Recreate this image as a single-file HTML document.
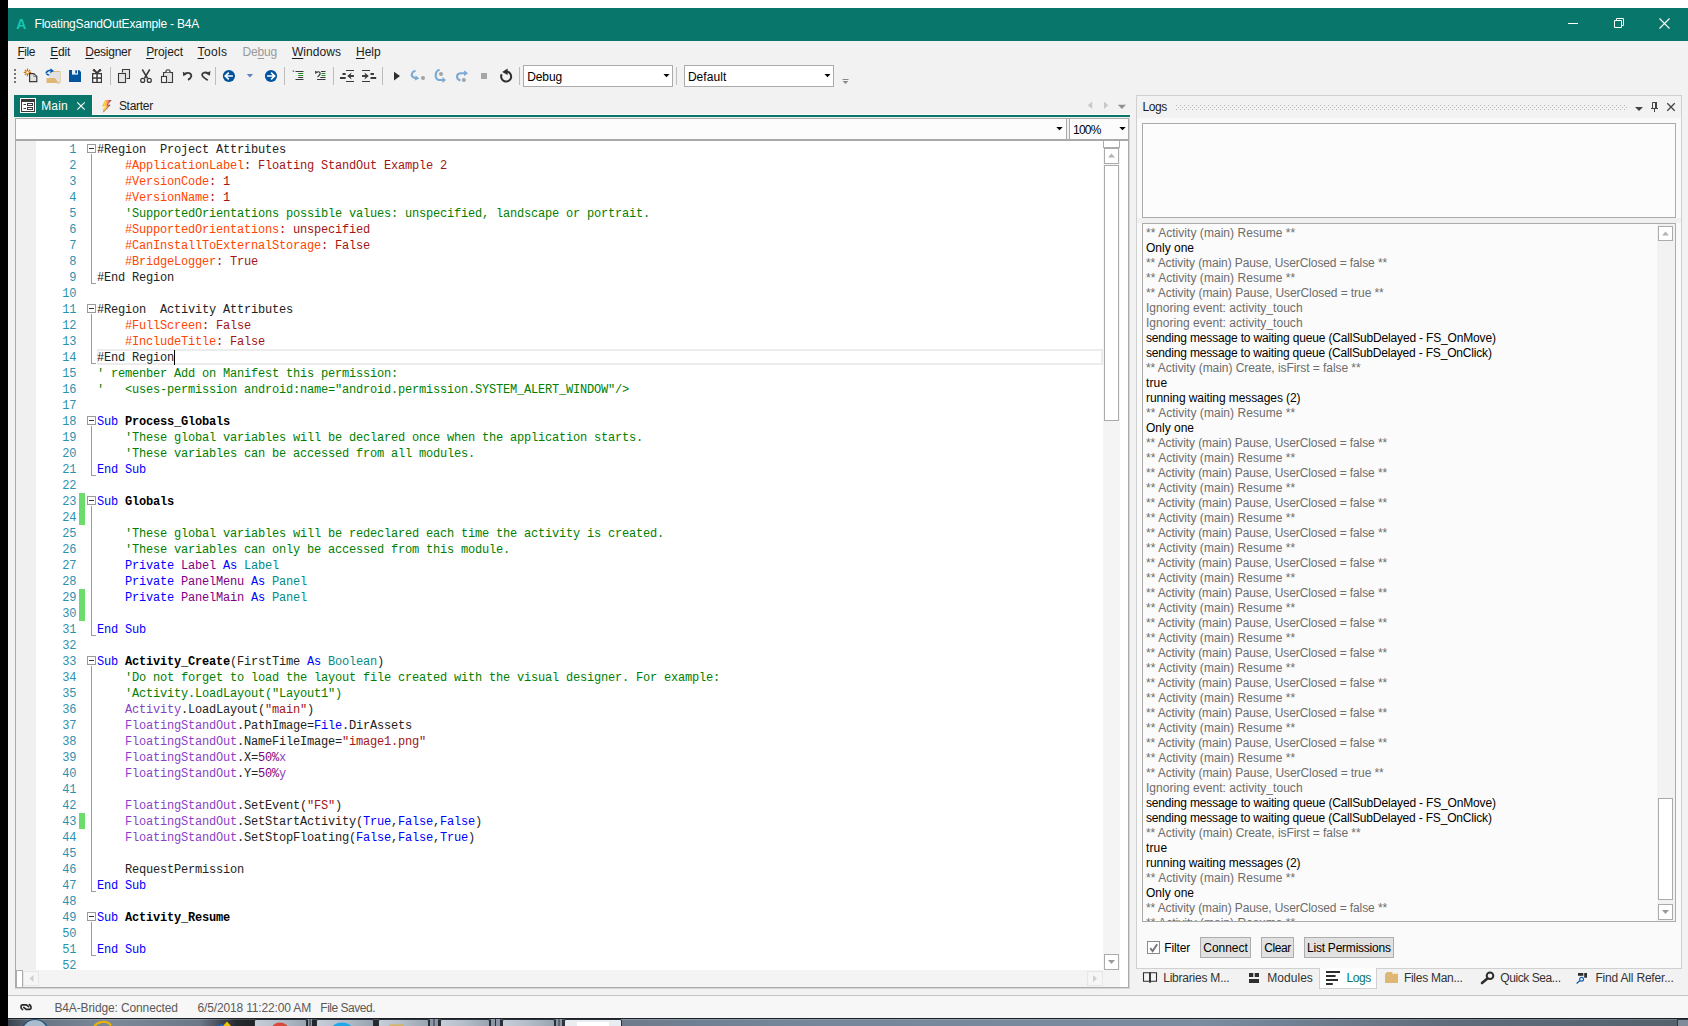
<!DOCTYPE html>
<html><head><meta charset="utf-8"><title>FloatingSandOutExample - B4A</title>
<style>
html,body{margin:0;padding:0;}
body{width:1688px;height:1026px;position:relative;overflow:hidden;background:#f2f2f2;font-family:"Liberation Sans",sans-serif;font-size:12px;}
.a{position:absolute;}
.t{white-space:pre;}
u{text-decoration:underline;text-underline-offset:1.5px;text-decoration-thickness:1px;}
pre{margin:0;font-family:"Liberation Mono",monospace;font-size:12px;letter-spacing:-0.2012px;line-height:16px;}
.ln{color:#2b91af;text-align:right;}
.code{color:#222;}
.k{color:#0000ff}.c{color:#008000}.o{color:#ff4500}.r{color:#a31515}.p{color:#800080}.q{color:#8b3fc7}
.y{color:#008b8b}.b{color:#000;font-weight:bold}.d{color:#222}.n{color:#800080}
</style></head>
<body>
<div class="a " style="left:0px;top:0px;width:8px;height:1026px;background:#000;"></div>
<div class="a " style="left:8px;top:0px;width:1680px;height:8px;background:#fff;"></div>
<div class="a " style="left:8px;top:8px;width:1680px;height:33px;background:#08766A;"></div>
<div class="a " style="left:8px;top:41px;width:1680px;height:977px;background:#F2F2F2;"></div>
<span class="a t" style="left:16.2px;top:15.55px;font-size:14px;line-height:16px;color:#17C7B3;letter-spacing:-0.511px;font-weight:bold;">A</span>
<span class="a t" style="left:34.5px;top:16.24px;font-size:12px;line-height:16px;color:#fff;letter-spacing:-0.199px;">FloatingSandOutExample - B4A</span>
<svg class="a" style="left:1560px;top:8px" width="128" height="33" viewBox="0 0 128 33">
<path d="M8 15.5h10" stroke="#fff" stroke-width="1" fill="none"/>
<path d="M54.5 12.5h7v7h-7z M56.5 12.5v-2h7v7h-2" stroke="#fff" stroke-width="1" fill="none"/>
<path d="M99.5 10.5l10 10 M109.5 10.5l-10 10" stroke="#fff" stroke-width="1.1" fill="none"/>
</svg>
<span class="a t" style="left:17.5px;top:44.44px;font-size:12px;line-height:16px;color:#1b1b1b;letter-spacing:-0.509px;"><u>F</u>ile</span>
<span class="a t" style="left:50.2px;top:44.44px;font-size:12px;line-height:16px;color:#1b1b1b;letter-spacing:-0.219px;"><u>E</u>dit</span>
<span class="a t" style="left:85.3px;top:44.44px;font-size:12px;line-height:16px;color:#1b1b1b;letter-spacing:-0.265px;"><u>D</u>esigner</span>
<span class="a t" style="left:146.2px;top:44.44px;font-size:12px;line-height:16px;color:#1b1b1b;letter-spacing:-0.092px;"><u>P</u>roject</span>
<span class="a t" style="left:197.6px;top:44.44px;font-size:12px;line-height:16px;color:#1b1b1b;letter-spacing:0.317px;"><u>T</u>ools</span>
<span class="a t" style="left:242.6px;top:44.44px;font-size:12px;line-height:16px;color:#9a9a9a;letter-spacing:-0.192px;">De<u>b</u>ug</span>
<span class="a t" style="left:291.9px;top:44.44px;font-size:12px;line-height:16px;color:#1b1b1b;letter-spacing:0.060px;"><u>W</u>indows</span>
<span class="a t" style="left:355.9px;top:44.44px;font-size:12px;line-height:16px;color:#1b1b1b;letter-spacing:0.055px;"><u>H</u>elp</span>
<svg class="a" style="left:8px;top:62px" width="860" height="30" viewBox="8 62 860 30"><rect x="14" y="69" width="2" height="2" fill="#767676"/><rect x="14" y="73" width="2" height="2" fill="#767676"/><rect x="14" y="77" width="2" height="2" fill="#767676"/><rect x="14" y="81" width="2" height="2" fill="#767676"/><rect x="110" y="67" width="1" height="18" fill="#bdbdbd"/><rect x="215" y="67" width="1" height="18" fill="#bdbdbd"/><rect x="284" y="67" width="1" height="18" fill="#bdbdbd"/><rect x="333" y="67" width="1" height="18" fill="#bdbdbd"/><rect x="382" y="67" width="1" height="18" fill="#bdbdbd"/><rect x="519" y="67" width="1" height="18" fill="#bdbdbd"/><rect x="676" y="67" width="1" height="18" fill="#bdbdbd"/><g stroke="#c8740a" stroke-width="1.15" fill="none"><path d="M27.5 68.6v7.6M23.7 72.4h7.6M24.9 69.8l5.2 5.2M30.1 69.8l-5.2 5.2"/></g><circle cx="27.5" cy="72.4" r="1.2" fill="#fff"/><path d="M29.6 73.6h4.2l3 3v5h-7.2z" fill="#e4e4e4" stroke="#3a3a3a" stroke-width="1.2"/><path d="M33.9 74v2.6h2.6z" fill="#fff" stroke="#3a3a3a" stroke-width="0.6"/><path d="M53 71.5h7v11.5h-3" fill="none" stroke="#e0b878" stroke-width="1"/><path d="M49 72h10.5v10.5h-10.5z" fill="#e2e2e2"/><path d="M46.5 78h8.5l3.5 5h-12z" fill="#deb775"/><path d="M46.3 73.2c0-3 6-3.6 6.3-1.6" fill="none" stroke="#0a5cb0" stroke-width="1.7"/><path d="M50.6 68.3l3.2 2.6l-3.6 2.4z" fill="#0a5cb0"/><path d="M46.4 73.5c0.6 1.3 1.6 1.6 2.8 1.6" fill="none" stroke="#0a5cb0" stroke-width="1.5"/><path d="M69 70h10l2 2v10h-12z" fill="#00539c"/><rect x="72" y="70" width="6" height="4.6" fill="#e8eef6"/><rect x="75.3" y="70.3" width="1.7" height="3" fill="#00539c"/><rect x="92" y="73" width="10" height="10" fill="#3a3a3a"/><rect x="93.3" y="74.3" width="3" height="3" fill="#fff"/><rect x="97.8" y="74.3" width="3" height="3" fill="#fff"/><rect x="93.3" y="78.8" width="3" height="3" fill="#fff"/><rect x="97.8" y="78.8" width="3" height="3" fill="#fff"/><path d="M97 73l-3.2-3.2M97 73l3.2-3.2" stroke="#3a3a3a" stroke-width="1.8" fill="none"/><circle cx="94" cy="70.2" r="1.2" fill="#3a3a3a"/><circle cx="100" cy="70.2" r="1.2" fill="#3a3a3a"/><path d="M122.5 72.5v-3h7v9h-3" fill="#e4e4e4" stroke="#3a3a3a" stroke-width="1.1"/><rect x="118.5" y="73.5" width="7" height="9" fill="#e4e4e4" stroke="#3a3a3a" stroke-width="1.1"/><path d="M142.3 69.5l5.3 9M149.7 69.5l-5.3 9" stroke="#3a3a3a" stroke-width="1.5" fill="none"/><circle cx="142.7" cy="80.4" r="2" fill="#f2f2f2" stroke="#3a3a3a" stroke-width="1.2"/><circle cx="149.3" cy="80.4" r="2" fill="#f2f2f2" stroke="#3a3a3a" stroke-width="1.2"/><path d="M163.5 76v-3.5h9v10h-5" fill="#e4e4e4" stroke="#3a3a3a" stroke-width="1.1"/><path d="M165.8 72.3c0-3.4 4.4-3.4 4.4 0" fill="#f2f2f2" stroke="#3a3a3a" stroke-width="1.1"/><rect x="161.5" y="76.5" width="5" height="6" fill="#f4f4f4" stroke="#3a3a3a" stroke-width="1.1"/><path d="M184.5 74.2c3-2.4 7-1 6.8 2c-0.2 1.6-1.4 2.6-3.3 3.7" fill="none" stroke="#3a3a3a" stroke-width="1.8"/><path d="M182.7 71.8l0.6 4.4l3.8-2.2z" fill="#3a3a3a"/><path d="M208.3 73.4c-2.6-1.6-6-1-6.2 1.2c-0.1 1.6 2 3.4 5.6 5.6" fill="none" stroke="#3a3a3a" stroke-width="1.8"/><path d="M210.4 71l-0.5 4.8l-4.2-2.4z" fill="#3a3a3a"/><circle cx="228.9" cy="76" r="6.1" fill="#00539c"/><path d="M232.9 76h-7M228.8 72.7l-3.5 3.3l3.5 3.3" fill="none" stroke="#fff" stroke-width="1.7"/><path d="M246.8 74h6.2l-3.1 3.4z" fill="#5b7fc4"/><circle cx="271" cy="76" r="6.1" fill="#00539c"/><path d="M267 76h7M271.1 72.7l3.5 3.3l-3.5 3.3" fill="none" stroke="#fff" stroke-width="1.7"/><path d="M295.5 71.5h8M298.2 77.5h5M295.5 79.5h8" stroke="#3a3a3a" stroke-width="1"/><path d="M298.2 73.5h5M298.2 75.5h5" stroke="#258a25" stroke-width="1"/><rect x="292.6" y="70.6" width="1.6" height="1" fill="#3a3a3a"/><path d="M321 71.5h4.5M320.3 77.5h5.2M317 79.5h8.5" stroke="#3a3a3a" stroke-width="1"/><path d="M321.5 73.5h4M321.5 75.5h4" stroke="#258a25" stroke-width="1"/><path d="M316.5 72.3c2.2-1.2 4-0.2 3.6 1.5c-0.3 1.2-1.3 2-2.6 3.2" fill="none" stroke="#3a3a3a" stroke-width="1.2"/><path d="M315 70.8l0.3 3.2l2.6-1.8z" fill="#3a3a3a"/><path d="M346 70.5h8M346 81.5h8" stroke="#3a3a3a" stroke-width="1"/><path d="M342.5 74h3.2M340 78h5.7" stroke="#3a3a3a" stroke-width="2"/><path d="M354 76h-4" stroke="#3a3a3a" stroke-width="1.9"/><path d="M351.6 72.4l-4.4 3.6l4.4 3.6l-1.2-3.6z" fill="#3a3a3a"/><path d="M362 70.5h8M362 81.5h8" stroke="#3a3a3a" stroke-width="1"/><path d="M370.5 74h3.4M370.5 78h5.7" stroke="#3a3a3a" stroke-width="2"/><path d="M362 76h4" stroke="#3a3a3a" stroke-width="1.9"/><path d="M364.4 72.4l4.4 3.6l-4.4 3.6l1.2-3.6z" fill="#3a3a3a"/><path d="M394 71.8v8.6l6-4.3z" fill="#2e2e2e"/><path d="M415.5 70.8c-4 1-4.8 4.6-2.4 6.4l3.6 1.6" fill="none" stroke="#7da9d2" stroke-width="2.1"/><path d="M415.6 75.6l3.8 3l-4.6 2z" fill="#7da9d2"/><circle cx="423" cy="78" r="2" fill="#a2a2a2"/><path d="M439.6 69.8c-4.6 1-5.4 8.6-1 10.2h5" fill="none" stroke="#7da9d2" stroke-width="2.1"/><path d="M442.4 77l3.6 3l-3.6 3z" fill="#7da9d2"/><circle cx="441" cy="73.9" r="2" fill="#a2a2a2"/><path d="M460.5 80.6c-4.6-1.4-4.6-7 0-7.4h5" fill="none" stroke="#7da9d2" stroke-width="2.1"/><path d="M464.2 70.2l3.8 3l-3.8 3z" fill="#7da9d2"/><circle cx="463.9" cy="79.9" r="2" fill="#a2a2a2"/><rect x="481" y="73" width="6" height="6" fill="#a6a6a6"/><path d="M501.7 74.3A5 5 0 1 0 506.6 71.6" fill="none" stroke="#2e2e2e" stroke-width="2"/><path d="M502.2 71.9L507.6 68.5L507.6 75z" fill="#2e2e2e"/><rect x="523.5" y="65.5" width="149" height="21" fill="#fff" stroke="#ababab" stroke-width="1"/><path d="M663.5 74h6l-3 3.2z" fill="#000"/><rect x="684.5" y="65.5" width="149" height="21" fill="#fff" stroke="#ababab" stroke-width="1"/><path d="M824.5 74h6l-3 3.2z" fill="#000"/><path d="M842.5 79.5h6" stroke="#8a8a8a" stroke-width="1"/><path d="M842.6 81h5.8l-2.9 3z" fill="#8a8a8a"/></svg>
<span class="a t" style="left:527.3px;top:69.24px;font-size:12px;line-height:16px;color:#000;letter-spacing:-0.132px;">Debug</span>
<span class="a t" style="left:687.9px;top:69.24px;font-size:12px;line-height:16px;color:#000;letter-spacing:0.054px;">Default</span>
<div class="a " style="left:14px;top:95px;width:78px;height:20px;background:#08766A;"></div>
<div class="a " style="left:92px;top:114px;width:1038px;height:1px;background:#fdfbfb;"></div>
<div class="a " style="left:92px;top:95px;width:1px;height:20px;background:#fbfbfb;"></div>
<div class="a " style="left:14px;top:115px;width:1116px;height:2px;background:#08766A;"></div>
<svg class="a" style="left:14px;top:95px" width="150" height="20" viewBox="14 95 150 20"><rect x="20" y="98" width="16" height="15" fill="#fff"/><rect x="21.5" y="99.5" width="13" height="12" fill="#fff" stroke="#3a3a3a" stroke-width="1"/><rect x="21" y="99" width="14" height="3" fill="#3a3a3a"/><path d="M23.5 104.5h2.5M23.5 108.5h2.5" stroke="#3a3a3a" stroke-width="1"/><rect x="27.5" y="103.5" width="5" height="2" fill="none" stroke="#3a3a3a" stroke-width="1"/><rect x="27.5" y="107.5" width="5" height="2" fill="none" stroke="#3a3a3a" stroke-width="1"/><path d="M77.3 102.3l7.4 7.4M84.7 102.3l-7.4 7.4" stroke="#fff" stroke-width="1.2" fill="none"/><defs><linearGradient id="lg" x1="0" y1="0" x2="1" y2="0"><stop offset="0" stop-color="#c4c63a"/><stop offset="0.35" stop-color="#ffd24a"/><stop offset="0.7" stop-color="#ff6e6e"/><stop offset="1" stop-color="#7a2a2a"/></linearGradient></defs><path d="M105 100.1H111.2L107 105H110.2L103.3 112.2L102.7 109.6L105.6 106.6H102z" fill="url(#lg)"/><path d="M111.2 100.1L107 105H110.2L103.3 112.2" fill="none" stroke="#5a2414" stroke-width="0.7" stroke-opacity="0.75"/></svg>
<span class="a t" style="left:41.2px;top:97.54px;font-size:12px;line-height:16px;color:#fff;letter-spacing:0.173px;">Main</span>
<span class="a t" style="left:118.9px;top:97.54px;font-size:12px;line-height:16px;color:#1b1b1b;letter-spacing:-0.273px;">Starter</span>
<div class="a " style="left:15px;top:118px;width:1114px;height:870px;background:#fff;border:1px solid #ababab;box-sizing:border-box;"></div>
<div class="a " style="left:1129px;top:118px;width:1px;height:871px;background:#d6d6d6;"></div>
<div class="a " style="left:15px;top:988px;width:1115px;height:1px;background:#d6d6d6;"></div>
<div class="a " style="left:16px;top:119px;width:1112px;height:20px;background:#fcfcfc;"></div>
<div class="a " style="left:16px;top:139px;width:1112px;height:2px;background:#a9a9a9;"></div>
<div class="a " style="left:1066px;top:119px;width:1px;height:20px;background:#ababab;"></div>
<div class="a " style="left:1067px;top:119px;width:2px;height:20px;background:#f0f0f0;"></div>
<div class="a " style="left:1069px;top:119px;width:1px;height:20px;background:#ababab;"></div>
<span class="a t" style="left:1073px;top:122.24px;font-size:12px;line-height:16px;color:#000;letter-spacing:-0.798px;">100%</span>
<svg class="a" style="left:1056px;top:126px" width="8" height="5"><path d="M0.3 1h6.4l-3.2 3.3z" fill="#000"/></svg>
<svg class="a" style="left:1119px;top:126px" width="8" height="5"><path d="M0.3 1h6.4l-3.2 3.3z" fill="#000"/></svg>
<div class="a " style="left:16px;top:141px;width:20px;height:829px;background:#f0f0f0;"></div>
<div class="a" style="left:97px;top:349px;width:1006px;height:16px;border:2px solid #ececec;box-sizing:border-box"></div>
<div class="a" style="left:79px;top:493px;width:6px;height:16px;background:#6cdc6c"></div>
<div class="a" style="left:79px;top:509px;width:6px;height:16px;background:#6cdc6c"></div>
<div class="a" style="left:79px;top:589px;width:6px;height:16px;background:#6cdc6c"></div>
<div class="a" style="left:79px;top:605px;width:6px;height:16px;background:#6cdc6c"></div>
<div class="a" style="left:79px;top:813px;width:6px;height:16px;background:#6cdc6c"></div>
<div class="a" style="left:87px;top:144px;width:9px;height:9px;border:1px solid #9a9a9a;box-sizing:border-box;background:#fff"></div>
<div class="a" style="left:89px;top:148px;width:5px;height:1px;background:#333"></div>
<div class="a" style="left:91px;top:154px;width:1px;height:130px;background:#9a9a9a"></div>
<div class="a" style="left:91px;top:283px;width:5px;height:1px;background:#9a9a9a"></div>
<div class="a" style="left:87px;top:304px;width:9px;height:9px;border:1px solid #9a9a9a;box-sizing:border-box;background:#fff"></div>
<div class="a" style="left:89px;top:308px;width:5px;height:1px;background:#333"></div>
<div class="a" style="left:91px;top:314px;width:1px;height:50px;background:#9a9a9a"></div>
<div class="a" style="left:91px;top:363px;width:5px;height:1px;background:#9a9a9a"></div>
<div class="a" style="left:87px;top:416px;width:9px;height:9px;border:1px solid #9a9a9a;box-sizing:border-box;background:#fff"></div>
<div class="a" style="left:89px;top:420px;width:5px;height:1px;background:#333"></div>
<div class="a" style="left:91px;top:426px;width:1px;height:50px;background:#9a9a9a"></div>
<div class="a" style="left:91px;top:475px;width:5px;height:1px;background:#9a9a9a"></div>
<div class="a" style="left:87px;top:496px;width:9px;height:9px;border:1px solid #9a9a9a;box-sizing:border-box;background:#fff"></div>
<div class="a" style="left:89px;top:500px;width:5px;height:1px;background:#333"></div>
<div class="a" style="left:91px;top:506px;width:1px;height:130px;background:#9a9a9a"></div>
<div class="a" style="left:91px;top:635px;width:5px;height:1px;background:#9a9a9a"></div>
<div class="a" style="left:87px;top:656px;width:9px;height:9px;border:1px solid #9a9a9a;box-sizing:border-box;background:#fff"></div>
<div class="a" style="left:89px;top:660px;width:5px;height:1px;background:#333"></div>
<div class="a" style="left:91px;top:666px;width:1px;height:226px;background:#9a9a9a"></div>
<div class="a" style="left:91px;top:891px;width:5px;height:1px;background:#9a9a9a"></div>
<div class="a" style="left:87px;top:912px;width:9px;height:9px;border:1px solid #9a9a9a;box-sizing:border-box;background:#fff"></div>
<div class="a" style="left:89px;top:916px;width:5px;height:1px;background:#333"></div>
<div class="a" style="left:91px;top:922px;width:1px;height:34px;background:#9a9a9a"></div>
<div class="a" style="left:91px;top:955px;width:5px;height:1px;background:#9a9a9a"></div>
<pre class="a ln" style="left:40px;top:142px;width:36.3px">1
2
3
4
5
6
7
8
9
10
11
12
13
14
15
16
17
18
19
20
21
22
23
24
25
26
27
28
29
30
31
32
33
34
35
36
37
38
39
40
41
42
43
44
45
46
47
48
49
50
51
52</pre>
<pre class="a code" style="left:97px;top:142px"><span class="d">#Region  Project Attributes</span>
<span class="o">    #ApplicationLabel</span><span class="r">: Floating StandOut Example 2</span>
<span class="o">    #VersionCode</span><span class="r">: 1</span>
<span class="o">    #VersionName</span><span class="r">: 1</span>
<span class="c">    'SupportedOrientations possible values: unspecified, landscape or portrait.</span>
<span class="o">    #SupportedOrientations</span><span class="r">: unspecified</span>
<span class="o">    #CanInstallToExternalStorage</span><span class="r">: False</span>
<span class="o">    #BridgeLogger</span><span class="r">: True</span>
<span class="d">#End Region</span>

<span class="d">#Region  Activity Attributes</span>
<span class="o">    #FullScreen</span><span class="r">: False</span>
<span class="o">    #IncludeTitle</span><span class="r">: False</span>
<span class="d">#End Region</span>
<span class="c">' remenber Add on Manifest this permission:</span>
<span class="c">'   &lt;uses-permission android:name="android.permission.SYSTEM_ALERT_WINDOW"/&gt;</span>

<span class="k">Sub </span><span class="b">Process_Globals</span>
<span class="c">    'These global variables will be declared once when the application starts.</span>
<span class="c">    'These variables can be accessed from all modules.</span>
<span class="k">End Sub</span>

<span class="k">Sub </span><span class="b">Globals</span>

<span class="c">    'These global variables will be redeclared each time the activity is created.</span>
<span class="c">    'These variables can only be accessed from this module.</span>
<span class="k">    Private </span><span class="p">Label</span><span class="k"> As </span><span class="y">Label</span>
<span class="k">    Private </span><span class="p">PanelMenu</span><span class="k"> As </span><span class="y">Panel</span>
<span class="k">    Private </span><span class="p">PanelMain</span><span class="k"> As </span><span class="y">Panel</span>

<span class="k">End Sub</span>

<span class="k">Sub </span><span class="b">Activity_Create</span><span class="d">(FirstTime</span><span class="k"> As </span><span class="y">Boolean</span><span class="d">)</span>
<span class="c">    'Do not forget to load the layout file created with the visual designer. For example:</span>
<span class="c">    'Activity.LoadLayout("Layout1")</span>
<span class="q">    Activity</span><span class="d">.LoadLayout(</span><span class="r">"main"</span><span class="d">)</span>
<span class="q">    FloatingStandOut</span><span class="d">.PathImage=</span><span class="k">File</span><span class="d">.DirAssets</span>
<span class="q">    FloatingStandOut</span><span class="d">.NameFileImage=</span><span class="r">"image1.png"</span>
<span class="q">    FloatingStandOut</span><span class="d">.X=</span><span class="n">50%</span><span class="q">x</span>
<span class="q">    FloatingStandOut</span><span class="d">.Y=</span><span class="n">50%</span><span class="q">y</span>

<span class="q">    FloatingStandOut</span><span class="d">.SetEvent(</span><span class="r">"FS"</span><span class="d">)</span>
<span class="q">    FloatingStandOut</span><span class="d">.SetStartActivity(</span><span class="k">True</span><span class="d">,</span><span class="k">False</span><span class="d">,</span><span class="k">False</span><span class="d">)</span>
<span class="q">    FloatingStandOut</span><span class="d">.SetStopFloating(</span><span class="k">False</span><span class="d">,</span><span class="k">False</span><span class="d">,</span><span class="k">True</span><span class="d">)</span>

<span class="d">    RequestPermission</span>
<span class="k">End Sub</span>

<span class="k">Sub </span><span class="b">Activity_Resume</span>

<span class="k">End Sub</span>
</pre>
<div class="a" style="left:174px;top:350px;width:1px;height:15px;background:#000"></div>
<div class="a " style="left:1103px;top:141px;width:17px;height:829px;background:#f4f4f4;"></div>
<div class="a " style="left:1103px;top:140px;width:17px;height:8px;background:#fff;border:1px solid #ababab;box-sizing:border-box;"></div>
<div class="a " style="left:1104px;top:148px;width:15px;height:16px;background:#fff;border:1px solid #ababab;box-sizing:border-box;"></div>
<div class="a " style="left:1104px;top:165px;width:15px;height:256px;background:#fff;border:1px solid #ababab;box-sizing:border-box;"></div>
<div class="a " style="left:1104px;top:954px;width:15px;height:16px;background:#fff;border:1px solid #ababab;box-sizing:border-box;"></div>
<svg class="a" style="left:1108px;top:153px" width="8" height="5"><path d="M0 4.5h7l-3.5-4z" fill="#b4b4b4"/></svg>
<svg class="a" style="left:1108px;top:960px" width="8" height="5"><path d="M0 0h7l-3.5 4z" fill="#9a9a9a"/></svg>
<div class="a " style="left:16px;top:970px;width:1104px;height:17px;background:#f4f4f4;"></div>
<div class="a " style="left:16px;top:970px;width:7px;height:17px;background:#fff;border:1px solid #ababab;box-sizing:border-box;border-bottom:none"></div>
<div class="a " style="left:23px;top:971px;width:16px;height:15px;background:#f6f6f6;border:1px solid #e6e6e6;box-sizing:border-box;"></div>
<div class="a " style="left:1087px;top:971px;width:16px;height:15px;background:#f6f6f6;border:1px solid #e6e6e6;box-sizing:border-box;"></div>
<svg class="a" style="left:29px;top:975px" width="5" height="8"><path d="M4.5 0v7l-4-3.5z" fill="#d0d0d0"/></svg>
<svg class="a" style="left:1093px;top:975px" width="5" height="8"><path d="M0 0v7l4-3.5z" fill="#d0d0d0"/></svg>
<svg class="a" style="left:1086px;top:99px" width="44" height="12"><path d="M6.2 2.4v7.6l-4.3-3.8z" fill="#c8c8c8"/><path d="M18 2.4v7.6l4.3-3.8z" fill="#c8c8c8"/><path d="M31.8 5.7h8.2l-4.1 4.3z" fill="#909090"/></svg>
<div class="a " style="left:1136px;top:95px;width:546px;height:874px;background:#fafafa;border:1px solid #d0d0d0;box-sizing:border-box;"></div>
<div class="a " style="left:1137px;top:96px;width:544px;height:22px;background:#F2F2F2;"></div>
<span class="a t" style="left:1142.4px;top:99.04px;font-size:12px;line-height:16px;color:#1b1b1b;letter-spacing:-0.405px;">Logs</span>
<svg class="a" style="left:1170px;top:98px" width="510" height="18" viewBox="1170 98 510 18"><path d="M1176 105h1M1176 109h1M1178 107h1M1180 105h1M1180 109h1M1182 107h1M1184 105h1M1184 109h1M1186 107h1M1188 105h1M1188 109h1M1190 107h1M1192 105h1M1192 109h1M1194 107h1M1196 105h1M1196 109h1M1198 107h1M1200 105h1M1200 109h1M1202 107h1M1204 105h1M1204 109h1M1206 107h1M1208 105h1M1208 109h1M1210 107h1M1212 105h1M1212 109h1M1214 107h1M1216 105h1M1216 109h1M1218 107h1M1220 105h1M1220 109h1M1222 107h1M1224 105h1M1224 109h1M1226 107h1M1228 105h1M1228 109h1M1230 107h1M1232 105h1M1232 109h1M1234 107h1M1236 105h1M1236 109h1M1238 107h1M1240 105h1M1240 109h1M1242 107h1M1244 105h1M1244 109h1M1246 107h1M1248 105h1M1248 109h1M1250 107h1M1252 105h1M1252 109h1M1254 107h1M1256 105h1M1256 109h1M1258 107h1M1260 105h1M1260 109h1M1262 107h1M1264 105h1M1264 109h1M1266 107h1M1268 105h1M1268 109h1M1270 107h1M1272 105h1M1272 109h1M1274 107h1M1276 105h1M1276 109h1M1278 107h1M1280 105h1M1280 109h1M1282 107h1M1284 105h1M1284 109h1M1286 107h1M1288 105h1M1288 109h1M1290 107h1M1292 105h1M1292 109h1M1294 107h1M1296 105h1M1296 109h1M1298 107h1M1300 105h1M1300 109h1M1302 107h1M1304 105h1M1304 109h1M1306 107h1M1308 105h1M1308 109h1M1310 107h1M1312 105h1M1312 109h1M1314 107h1M1316 105h1M1316 109h1M1318 107h1M1320 105h1M1320 109h1M1322 107h1M1324 105h1M1324 109h1M1326 107h1M1328 105h1M1328 109h1M1330 107h1M1332 105h1M1332 109h1M1334 107h1M1336 105h1M1336 109h1M1338 107h1M1340 105h1M1340 109h1M1342 107h1M1344 105h1M1344 109h1M1346 107h1M1348 105h1M1348 109h1M1350 107h1M1352 105h1M1352 109h1M1354 107h1M1356 105h1M1356 109h1M1358 107h1M1360 105h1M1360 109h1M1362 107h1M1364 105h1M1364 109h1M1366 107h1M1368 105h1M1368 109h1M1370 107h1M1372 105h1M1372 109h1M1374 107h1M1376 105h1M1376 109h1M1378 107h1M1380 105h1M1380 109h1M1382 107h1M1384 105h1M1384 109h1M1386 107h1M1388 105h1M1388 109h1M1390 107h1M1392 105h1M1392 109h1M1394 107h1M1396 105h1M1396 109h1M1398 107h1M1400 105h1M1400 109h1M1402 107h1M1404 105h1M1404 109h1M1406 107h1M1408 105h1M1408 109h1M1410 107h1M1412 105h1M1412 109h1M1414 107h1M1416 105h1M1416 109h1M1418 107h1M1420 105h1M1420 109h1M1422 107h1M1424 105h1M1424 109h1M1426 107h1M1428 105h1M1428 109h1M1430 107h1M1432 105h1M1432 109h1M1434 107h1M1436 105h1M1436 109h1M1438 107h1M1440 105h1M1440 109h1M1442 107h1M1444 105h1M1444 109h1M1446 107h1M1448 105h1M1448 109h1M1450 107h1M1452 105h1M1452 109h1M1454 107h1M1456 105h1M1456 109h1M1458 107h1M1460 105h1M1460 109h1M1462 107h1M1464 105h1M1464 109h1M1466 107h1M1468 105h1M1468 109h1M1470 107h1M1472 105h1M1472 109h1M1474 107h1M1476 105h1M1476 109h1M1478 107h1M1480 105h1M1480 109h1M1482 107h1M1484 105h1M1484 109h1M1486 107h1M1488 105h1M1488 109h1M1490 107h1M1492 105h1M1492 109h1M1494 107h1M1496 105h1M1496 109h1M1498 107h1M1500 105h1M1500 109h1M1502 107h1M1504 105h1M1504 109h1M1506 107h1M1508 105h1M1508 109h1M1510 107h1M1512 105h1M1512 109h1M1514 107h1M1516 105h1M1516 109h1M1518 107h1M1520 105h1M1520 109h1M1522 107h1M1524 105h1M1524 109h1M1526 107h1M1528 105h1M1528 109h1M1530 107h1M1532 105h1M1532 109h1M1534 107h1M1536 105h1M1536 109h1M1538 107h1M1540 105h1M1540 109h1M1542 107h1M1544 105h1M1544 109h1M1546 107h1M1548 105h1M1548 109h1M1550 107h1M1552 105h1M1552 109h1M1554 107h1M1556 105h1M1556 109h1M1558 107h1M1560 105h1M1560 109h1M1562 107h1M1564 105h1M1564 109h1M1566 107h1M1568 105h1M1568 109h1M1570 107h1M1572 105h1M1572 109h1M1574 107h1M1576 105h1M1576 109h1M1578 107h1M1580 105h1M1580 109h1M1582 107h1M1584 105h1M1584 109h1M1586 107h1M1588 105h1M1588 109h1M1590 107h1M1592 105h1M1592 109h1M1594 107h1M1596 105h1M1596 109h1M1598 107h1M1600 105h1M1600 109h1M1602 107h1M1604 105h1M1604 109h1M1606 107h1M1608 105h1M1608 109h1M1610 107h1M1612 105h1M1612 109h1M1614 107h1M1616 105h1M1616 109h1M1618 107h1M1620 105h1M1620 109h1M1622 107h1M1624 105h1M1624 109h1M1626 107h1" stroke="#b4b4b4" stroke-width="1" transform="translate(0,0.5)"/><path d="M1635 107h8l-4 4z" fill="#444"/><path d="M1652.5 102.5h4v6h-4zM1651 108.5h7M1654.5 108.5v3.5" fill="none" stroke="#444" stroke-width="1"/><rect x="1655" y="102" width="2" height="6.5" fill="#444"/><path d="M1667.3 103.3l7.4 7.4M1674.7 103.3l-7.4 7.4" stroke="#444" stroke-width="1.3" fill="none"/></svg>
<div class="a " style="left:1142px;top:123px;width:534px;height:95px;background:#fcfcfc;border:1px solid #ababab;box-sizing:border-box;"></div>
<div class="a " style="left:1137px;top:218px;width:544px;height:5px;background:#f0f0f0;"></div>
<div class="a " style="left:1142px;top:223px;width:534px;height:699px;background:#fbfbfb;border:1px solid #ababab;box-sizing:border-box;"></div>
<div class="a" style="left:1143px;top:224px;width:514px;height:697px;overflow:hidden">
<span class="a t" style="left:3px;top:1.84px;line-height:15px;font-size:12px;color:#6d6d6d;letter-spacing:0.041px">** Activity (main) Resume **</span>
<span class="a t" style="left:3px;top:16.84px;line-height:15px;font-size:12px;color:#000;letter-spacing:-0.003px">Only one</span>
<span class="a t" style="left:3px;top:31.84px;line-height:15px;font-size:12px;color:#6d6d6d;letter-spacing:-0.101px">** Activity (main) Pause, UserClosed = false **</span>
<span class="a t" style="left:3px;top:46.84px;line-height:15px;font-size:12px;color:#6d6d6d;letter-spacing:0.041px">** Activity (main) Resume **</span>
<span class="a t" style="left:3px;top:61.84px;line-height:15px;font-size:12px;color:#6d6d6d;letter-spacing:-0.074px">** Activity (main) Pause, UserClosed = true **</span>
<span class="a t" style="left:3px;top:76.84px;line-height:15px;font-size:12px;color:#6d6d6d;letter-spacing:0.040px">Ignoring event: activity_touch</span>
<span class="a t" style="left:3px;top:91.84px;line-height:15px;font-size:12px;color:#6d6d6d;letter-spacing:0.040px">Ignoring event: activity_touch</span>
<span class="a t" style="left:3px;top:106.84px;line-height:15px;font-size:12px;color:#000;letter-spacing:-0.172px">sending message to waiting queue (CallSubDelayed - FS_OnMove)</span>
<span class="a t" style="left:3px;top:121.84px;line-height:15px;font-size:12px;color:#000;letter-spacing:-0.179px">sending message to waiting queue (CallSubDelayed - FS_OnClick)</span>
<span class="a t" style="left:3px;top:136.84px;line-height:15px;font-size:12px;color:#6d6d6d;letter-spacing:-0.055px">** Activity (main) Create, isFirst = false **</span>
<span class="a t" style="left:3px;top:151.84px;line-height:15px;font-size:12px;color:#000;letter-spacing:0.131px">true</span>
<span class="a t" style="left:3px;top:166.84px;line-height:15px;font-size:12px;color:#000;letter-spacing:-0.080px">running waiting messages (2)</span>
<span class="a t" style="left:3px;top:181.84px;line-height:15px;font-size:12px;color:#6d6d6d;letter-spacing:0.041px">** Activity (main) Resume **</span>
<span class="a t" style="left:3px;top:196.84px;line-height:15px;font-size:12px;color:#000;letter-spacing:-0.003px">Only one</span>
<span class="a t" style="left:3px;top:211.84px;line-height:15px;font-size:12px;color:#6d6d6d;letter-spacing:-0.101px">** Activity (main) Pause, UserClosed = false **</span>
<span class="a t" style="left:3px;top:226.84px;line-height:15px;font-size:12px;color:#6d6d6d;letter-spacing:0.041px">** Activity (main) Resume **</span>
<span class="a t" style="left:3px;top:241.84px;line-height:15px;font-size:12px;color:#6d6d6d;letter-spacing:-0.101px">** Activity (main) Pause, UserClosed = false **</span>
<span class="a t" style="left:3px;top:256.84px;line-height:15px;font-size:12px;color:#6d6d6d;letter-spacing:0.041px">** Activity (main) Resume **</span>
<span class="a t" style="left:3px;top:271.84px;line-height:15px;font-size:12px;color:#6d6d6d;letter-spacing:-0.101px">** Activity (main) Pause, UserClosed = false **</span>
<span class="a t" style="left:3px;top:286.84px;line-height:15px;font-size:12px;color:#6d6d6d;letter-spacing:0.041px">** Activity (main) Resume **</span>
<span class="a t" style="left:3px;top:301.84px;line-height:15px;font-size:12px;color:#6d6d6d;letter-spacing:-0.101px">** Activity (main) Pause, UserClosed = false **</span>
<span class="a t" style="left:3px;top:316.84px;line-height:15px;font-size:12px;color:#6d6d6d;letter-spacing:0.041px">** Activity (main) Resume **</span>
<span class="a t" style="left:3px;top:331.84px;line-height:15px;font-size:12px;color:#6d6d6d;letter-spacing:-0.101px">** Activity (main) Pause, UserClosed = false **</span>
<span class="a t" style="left:3px;top:346.84px;line-height:15px;font-size:12px;color:#6d6d6d;letter-spacing:0.041px">** Activity (main) Resume **</span>
<span class="a t" style="left:3px;top:361.84px;line-height:15px;font-size:12px;color:#6d6d6d;letter-spacing:-0.101px">** Activity (main) Pause, UserClosed = false **</span>
<span class="a t" style="left:3px;top:376.84px;line-height:15px;font-size:12px;color:#6d6d6d;letter-spacing:0.041px">** Activity (main) Resume **</span>
<span class="a t" style="left:3px;top:391.84px;line-height:15px;font-size:12px;color:#6d6d6d;letter-spacing:-0.101px">** Activity (main) Pause, UserClosed = false **</span>
<span class="a t" style="left:3px;top:406.84px;line-height:15px;font-size:12px;color:#6d6d6d;letter-spacing:0.041px">** Activity (main) Resume **</span>
<span class="a t" style="left:3px;top:421.84px;line-height:15px;font-size:12px;color:#6d6d6d;letter-spacing:-0.101px">** Activity (main) Pause, UserClosed = false **</span>
<span class="a t" style="left:3px;top:436.84px;line-height:15px;font-size:12px;color:#6d6d6d;letter-spacing:0.041px">** Activity (main) Resume **</span>
<span class="a t" style="left:3px;top:451.84px;line-height:15px;font-size:12px;color:#6d6d6d;letter-spacing:-0.101px">** Activity (main) Pause, UserClosed = false **</span>
<span class="a t" style="left:3px;top:466.84px;line-height:15px;font-size:12px;color:#6d6d6d;letter-spacing:0.041px">** Activity (main) Resume **</span>
<span class="a t" style="left:3px;top:481.84px;line-height:15px;font-size:12px;color:#6d6d6d;letter-spacing:-0.101px">** Activity (main) Pause, UserClosed = false **</span>
<span class="a t" style="left:3px;top:496.84px;line-height:15px;font-size:12px;color:#6d6d6d;letter-spacing:0.041px">** Activity (main) Resume **</span>
<span class="a t" style="left:3px;top:511.84px;line-height:15px;font-size:12px;color:#6d6d6d;letter-spacing:-0.101px">** Activity (main) Pause, UserClosed = false **</span>
<span class="a t" style="left:3px;top:526.84px;line-height:15px;font-size:12px;color:#6d6d6d;letter-spacing:0.041px">** Activity (main) Resume **</span>
<span class="a t" style="left:3px;top:541.84px;line-height:15px;font-size:12px;color:#6d6d6d;letter-spacing:-0.074px">** Activity (main) Pause, UserClosed = true **</span>
<span class="a t" style="left:3px;top:556.84px;line-height:15px;font-size:12px;color:#6d6d6d;letter-spacing:0.040px">Ignoring event: activity_touch</span>
<span class="a t" style="left:3px;top:571.84px;line-height:15px;font-size:12px;color:#000;letter-spacing:-0.172px">sending message to waiting queue (CallSubDelayed - FS_OnMove)</span>
<span class="a t" style="left:3px;top:586.84px;line-height:15px;font-size:12px;color:#000;letter-spacing:-0.179px">sending message to waiting queue (CallSubDelayed - FS_OnClick)</span>
<span class="a t" style="left:3px;top:601.84px;line-height:15px;font-size:12px;color:#6d6d6d;letter-spacing:-0.055px">** Activity (main) Create, isFirst = false **</span>
<span class="a t" style="left:3px;top:616.84px;line-height:15px;font-size:12px;color:#000;letter-spacing:0.131px">true</span>
<span class="a t" style="left:3px;top:631.84px;line-height:15px;font-size:12px;color:#000;letter-spacing:-0.080px">running waiting messages (2)</span>
<span class="a t" style="left:3px;top:646.84px;line-height:15px;font-size:12px;color:#6d6d6d;letter-spacing:0.041px">** Activity (main) Resume **</span>
<span class="a t" style="left:3px;top:661.84px;line-height:15px;font-size:12px;color:#000;letter-spacing:-0.003px">Only one</span>
<span class="a t" style="left:3px;top:676.84px;line-height:15px;font-size:12px;color:#6d6d6d;letter-spacing:-0.101px">** Activity (main) Pause, UserClosed = false **</span>
<span class="a t" style="left:3px;top:691.84px;line-height:15px;font-size:12px;color:#6d6d6d;letter-spacing:0.041px">** Activity (main) Resume **</span>
</div>
<div class="a " style="left:1657px;top:224px;width:18px;height:697px;background:#f2f2f2;"></div>
<div class="a " style="left:1658px;top:226px;width:15px;height:15px;background:#fff;border:1px solid #ababab;box-sizing:border-box;"></div>
<div class="a " style="left:1658px;top:798px;width:15px;height:102px;background:#fff;border:1px solid #ababab;box-sizing:border-box;"></div>
<div class="a " style="left:1658px;top:904px;width:15px;height:16px;background:#fff;border:1px solid #ababab;box-sizing:border-box;"></div>
<svg class="a" style="left:1662px;top:231px" width="8" height="5"><path d="M0 4.5h7l-3.5-4z" fill="#b4b4b4"/></svg>
<svg class="a" style="left:1662px;top:910px" width="8" height="5"><path d="M0 0h7l-3.5 4z" fill="#9a9a9a"/></svg>
<div class="a " style="left:1147px;top:941px;width:13px;height:13px;background:#fff;border:1px solid #8a8a8a;box-sizing:border-box;"></div>
<svg class="a" style="left:1149px;top:943px" width="10" height="10"><path d="M1.2 5.2l2.4 2.9L8.2 1.2" stroke="#777" stroke-width="1.9" fill="none"/></svg>
<span class="a t" style="left:1164.3px;top:940.24px;font-size:12px;line-height:16px;color:#000;letter-spacing:-0.161px;">Filter</span>
<div class="a " style="left:1200px;top:937px;width:51px;height:21px;background:#e1e1e1;border:1px solid #adadad;box-sizing:border-box;"></div>
<span class="a t" style="left:1203.3px;top:940.24px;font-size:12px;line-height:16px;color:#000;letter-spacing:-0.042px;">Connect</span>
<div class="a " style="left:1261px;top:937px;width:33px;height:21px;background:#e1e1e1;border:1px solid #adadad;box-sizing:border-box;"></div>
<span class="a t" style="left:1264.2px;top:940.24px;font-size:12px;line-height:16px;color:#000;letter-spacing:-0.435px;">Clear</span>
<div class="a " style="left:1304px;top:937px;width:90px;height:21px;background:#e1e1e1;border:1px solid #adadad;box-sizing:border-box;"></div>
<span class="a t" style="left:1307px;top:940.24px;font-size:12px;line-height:16px;color:#000;letter-spacing:-0.228px;">List Permissions</span>
<div class="a " style="left:1319px;top:968px;width:58px;height:21px;background:#fff;border:1px solid #d0d0d0;box-sizing:border-box;border-top:none;"></div>
<span class="a t" style="left:1163.2px;top:970.04px;font-size:12px;line-height:16px;color:#333;letter-spacing:-0.218px;">Libraries M...</span>
<span class="a t" style="left:1267.3px;top:970.04px;font-size:12px;line-height:16px;color:#333;letter-spacing:0.035px;">Modules</span>
<span class="a t" style="left:1346.4px;top:970.04px;font-size:12px;line-height:16px;color:#08766A;letter-spacing:-0.405px;">Logs</span>
<span class="a t" style="left:1403.9px;top:970.04px;font-size:12px;line-height:16px;color:#333;letter-spacing:-0.268px;">Files Man...</span>
<span class="a t" style="left:1500.3px;top:970.04px;font-size:12px;line-height:16px;color:#333;letter-spacing:-0.422px;">Quick Sea...</span>
<span class="a t" style="left:1595.4px;top:970.04px;font-size:12px;line-height:16px;color:#333;letter-spacing:-0.186px;">Find All Refer...</span>
<svg class="a" style="left:1140px;top:969px" width="450" height="18" viewBox="1140 969 450 18"><path d="M1143.5 972.8h6.5v8.5h-6.5zM1150 972.8h6.5v8.5h-6.5z" fill="#f4f4f4" stroke="#2e2e2e" stroke-width="1.1"/><path d="M1150 972.5v10.3" stroke="#2e2e2e" stroke-width="1.7"/><rect x="1249" y="973" width="4.3" height="4" fill="#2e2e2e"/><rect x="1254.7" y="973" width="4.3" height="4" fill="#2e2e2e"/><rect x="1249" y="979" width="10" height="4" fill="#2e2e2e"/><path d="M1326 972h14M1326 976h9.6M1326 980h12M1326 984h6.8" stroke="#2e2e2e" stroke-width="1.8"/><path d="M1385 974l2-2h5l1 1h5v10h-13z" fill="#deb775"/><path d="M1392 973.5h6" stroke="#f4e2bd" stroke-width="1"/><circle cx="1490" cy="975.8" r="3.3" fill="#f4f4f4" stroke="#2e2e2e" stroke-width="2"/><path d="M1487.4 978.4l-5.4 4.6" stroke="#2e2e2e" stroke-width="2.6" stroke-linecap="round"/><rect x="1578" y="973" width="5.3" height="2.8" fill="#2e2e2e"/><rect x="1584.2" y="973" width="2.8" height="4.7" fill="#2e2e2e"/><circle cx="1581.6" cy="979.2" r="1.9" fill="#f4f4f4" stroke="#1560b0" stroke-width="1.2"/><path d="M1580 980.6l-3.4 3" stroke="#1560b0" stroke-width="1.4"/></svg>
<div class="a " style="left:8px;top:995px;width:1680px;height:1px;background:#c6c6c6;"></div>
<div class="a " style="left:8px;top:996px;width:1680px;height:22px;background:#f7f7f7;"></div>
<span class="a t" style="left:54.4px;top:999.74px;font-size:12px;line-height:16px;color:#5a5a5a;letter-spacing:-0.122px;">B4A-Bridge: Connected</span>
<span class="a t" style="left:197.5px;top:999.74px;font-size:12px;line-height:16px;color:#5a5a5a;letter-spacing:-0.151px;">6/5/2018 11:22:00 AM</span>
<span class="a t" style="left:320.3px;top:999.74px;font-size:12px;line-height:16px;color:#5a5a5a;letter-spacing:-0.484px;">File Saved.</span>
<svg class="a" style="left:18px;top:1000px" width="18" height="14" viewBox="18 1000 18 14"><path d="M22.6 1009.5C20.5 1008.6 20.4 1005 22.6 1004.9H26.4L28.6 1006.7" fill="none" stroke="#2b2b2b" stroke-width="1.7" stroke-linecap="round" stroke-linejoin="round"/><path d="M29.3 1004.6C31.5 1005.4 31.6 1009.2 29.4 1009.3H26.2L23.8 1007.3" fill="none" stroke="#2b2b2b" stroke-width="1.7" stroke-linecap="round" stroke-linejoin="round"/></svg>
<svg class="a" style="left:8px;top:1018px" width="1680" height="8" viewBox="8 1018 1680 8"><defs><linearGradient id="tb" x1="0" y1="0" x2="1" y2="0"><stop offset="0.0000" stop-color="#39424f"/><stop offset="0.0190" stop-color="#697585"/><stop offset="0.0607" stop-color="#7c8999"/><stop offset="0.1143" stop-color="#6c7887"/><stop offset="0.1357" stop-color="#262a30"/><stop offset="0.1464" stop-color="#1f2226"/><stop offset="0.3286" stop-color="#2c3138"/><stop offset="0.3661" stop-color="#6d7b8c"/><stop offset="0.4714" stop-color="#76869a"/><stop offset="0.7095" stop-color="#7c8ca0"/><stop offset="0.8583" stop-color="#5f6c7a"/><stop offset="1.0000" stop-color="#55626e"/></linearGradient><linearGradient id="bt" x1="0" y1="0" x2="1" y2="0"><stop offset="0" stop-color="#c6ced8"/><stop offset="0.5" stop-color="#b3bdc9"/><stop offset="1" stop-color="#98a4b2"/></linearGradient></defs><rect x="8" y="1018" width="1680" height="8" fill="url(#tb)"/><rect x="8" y="1018" width="1680" height="1" fill="#1c1f24"/><rect x="8" y="1019" width="1680" height="1" fill="#fff" fill-opacity="0.18"/><ellipse cx="35" cy="1034" rx="14" ry="14.5" fill="#a9bccd" stroke="#1d4e78" stroke-width="1.2"/><path d="M94 1027c3-6 13-7 17-1.5" fill="none" stroke="#f0b400" stroke-width="2"/><path d="M223 1026l4-4.5l4 4.5z" fill="#f0c400"/><path d="M215 1026l8-2v2z" fill="#1c64c8"/><rect x="254.5" y="1019.5" width="52" height="10" rx="1.5" fill="url(#bt)" stroke="#2a3038" stroke-width="1"/><rect x="316.5" y="1019.5" width="57" height="10" rx="1.5" fill="url(#bt)" stroke="#2a3038" stroke-width="1"/><rect x="378.5" y="1019.5" width="50" height="10" rx="1.5" fill="url(#bt)" stroke="#2a3038" stroke-width="1"/><rect x="440.5" y="1019.5" width="49" height="10" rx="1.5" fill="url(#bt)" stroke="#2a3038" stroke-width="1"/><rect x="502.5" y="1019.5" width="52" height="10" rx="1.5" fill="url(#bt)" stroke="#2a3038" stroke-width="1"/><rect x="564.5" y="1019.5" width="57" height="10" rx="1.5" fill="#e9edf2" stroke="#2a3038" stroke-width="1"/><rect x="308" y="1019" width="4" height="7" fill="#8a96a5"/><rect x="309.5" y="1019" width="1" height="7" fill="#2a3038"/><rect x="430" y="1019" width="8" height="7" fill="#8a96a5"/><rect x="433.5" y="1019" width="1" height="7" fill="#2a3038"/><rect x="491" y="1019" width="9" height="7" fill="#8a96a5"/><rect x="495.0" y="1019" width="1" height="7" fill="#2a3038"/><rect x="556" y="1019" width="6" height="7" fill="#8a96a5"/><rect x="558.5" y="1019" width="1" height="7" fill="#2a3038"/><ellipse cx="280" cy="1030" rx="9" ry="7.5" fill="#d94a3a"/><ellipse cx="342" cy="1030" rx="11" ry="7.5" fill="#1fa8ea"/><rect x="389" y="1024.5" width="15" height="3" fill="#d8b45c"/><rect x="577" y="1022" width="32" height="5" fill="#fff"/><rect x="1677.5" y="1019.5" width="11" height="8" fill="#808c99" stroke="#2f3741" stroke-width="1"/></svg>
</body></html>
